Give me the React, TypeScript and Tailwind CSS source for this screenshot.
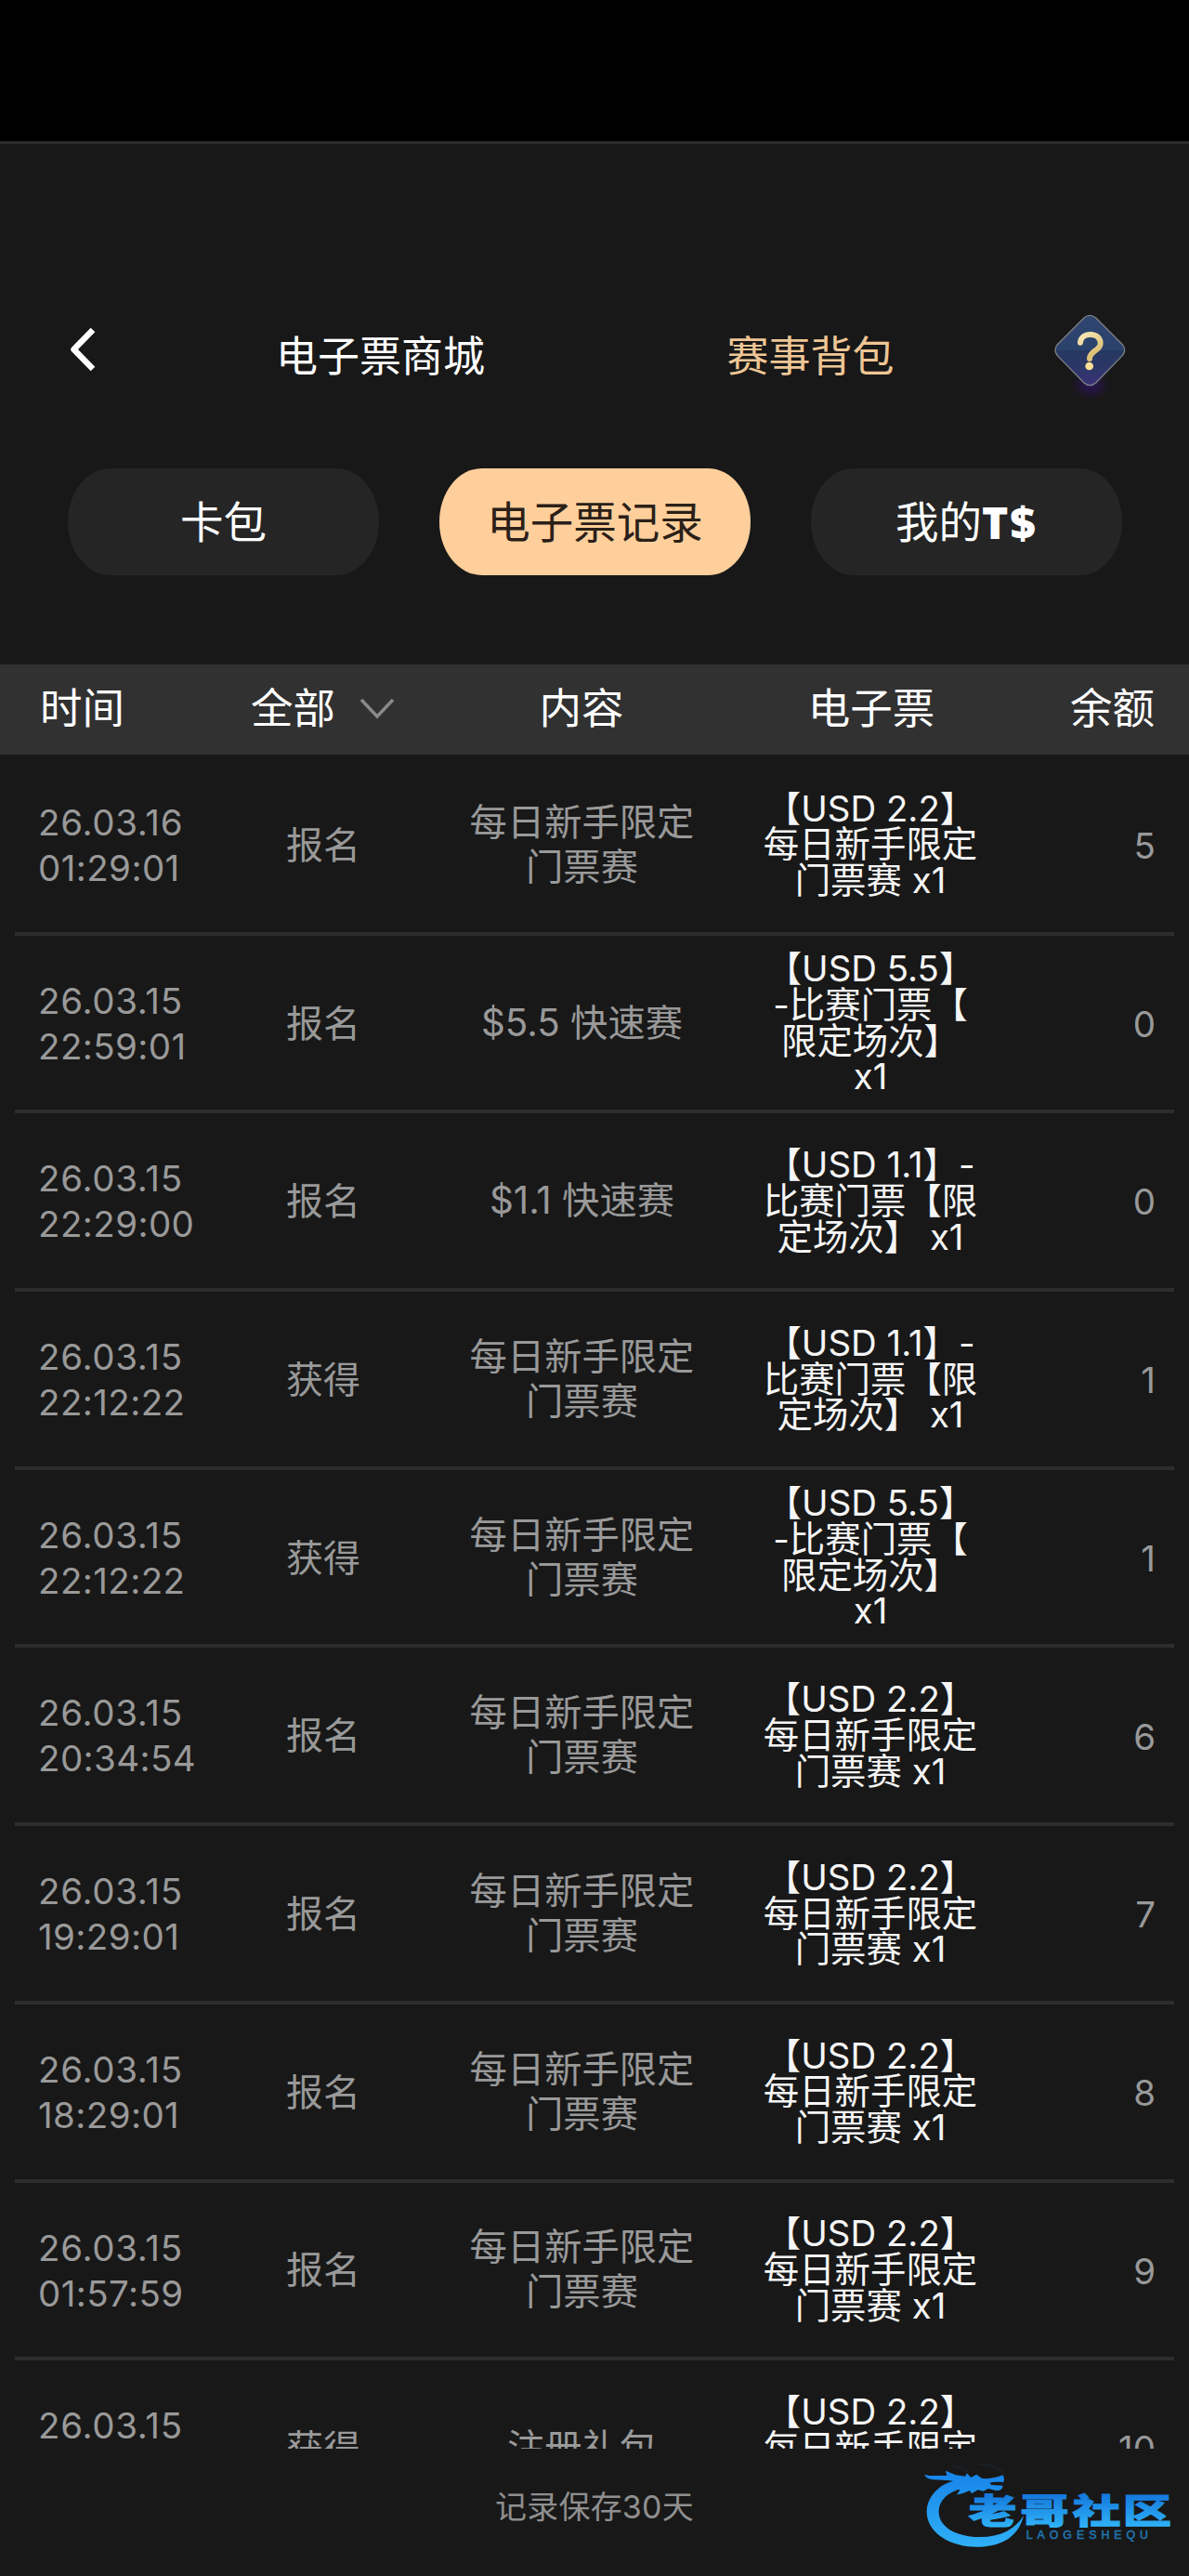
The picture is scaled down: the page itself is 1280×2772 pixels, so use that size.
import { ReactNode, useCallback, useState } from "react";
import clsx from "clsx";

interface TicketRecord {
  date: string;
  time: string;
  type: string;
  content: string[];
  ticket: string[];
  balance: number;
}

const DAILY = ["每日新手限定", "门票赛"];
const USD_2 = ["【USD 2.2】", "每日新手限定", "门票赛 x1"];
const USD_5 = ["【USD 5.5】", "-比赛门票【", "限定场次】", "x1"];
const USD_1 = ["【USD 1.1】-", "比赛门票【限", "定场次】 x1"];

const records: TicketRecord[] = [
  { date: "26.03.16", time: "01:29:01", type: "报名", content: DAILY, ticket: USD_2, balance: 5 },
  { date: "26.03.15", time: "22:59:01", type: "报名", content: ["$5.5 快速赛"], ticket: USD_5, balance: 0 },
  { date: "26.03.15", time: "22:29:00", type: "报名", content: ["$1.1 快速赛"], ticket: USD_1, balance: 0 },
  { date: "26.03.15", time: "22:12:22", type: "获得", content: DAILY, ticket: USD_1, balance: 1 },
  { date: "26.03.15", time: "22:12:22", type: "获得", content: DAILY, ticket: USD_5, balance: 1 },
  { date: "26.03.15", time: "20:34:54", type: "报名", content: DAILY, ticket: USD_2, balance: 6 },
  { date: "26.03.15", time: "19:29:01", type: "报名", content: DAILY, ticket: USD_2, balance: 7 },
  { date: "26.03.15", time: "18:29:01", type: "报名", content: DAILY, ticket: USD_2, balance: 8 },
  { date: "26.03.15", time: "01:57:59", type: "报名", content: DAILY, ticket: USD_2, balance: 9 },
  { date: "26.03.15", time: "", type: "获得", content: ["注册礼包"], ticket: USD_2.slice(0, 2), balance: 10 },
];

function Lines({ lines, className }: { lines: string[]; className: string }) {
  return (
    <div className={className}>
      {lines.map((line, i) => (
        <div key={i}>{line}</div>
      ))}
    </div>
  );
}

function HelpIcon() {
  return (
    <svg width="130" height="120" viewBox="0 0 390 360" fill="none">
      <defs>
        <linearGradient id="help-fill" x1="0" y1="56" x2="0" y2="286" gradientUnits="userSpaceOnUse">
          <stop offset="0" stopColor="#2f4670" />
          <stop offset="0.5" stopColor="#2a426c" />
          <stop offset="0.5" stopColor="#253860" />
          <stop offset="0.72" stopColor="#2b3766" />
          <stop offset="1" stopColor="#3a3078" />
        </linearGradient>
        <linearGradient id="help-mark" x1="155" y1="110" x2="235" y2="235" gradientUnits="userSpaceOnUse">
          <stop offset="0" stopColor="#fdf0c0" />
          <stop offset="0.6" stopColor="#dcc075" />
          <stop offset="1" stopColor="#fbe3a0" />
        </linearGradient>
        <radialGradient id="help-glow">
          <stop offset="0" stopColor="#2c1458" />
          <stop offset="1" stopColor="#2c1458" stopOpacity="0" />
        </radialGradient>
      </defs>
      <ellipse cx="195" cy="282" rx="62" ry="48" fill="url(#help-glow)" />
      <path
        d="M174 66Q193 50 212 66L298 152Q312 170 298 188L212 276Q193 292 174 276L88 188Q74 170 88 152Z"
        fill="url(#help-fill)"
        stroke="#7c8085"
        strokeWidth="4"
      />
      <path
        d="M162 146C163 130 176 120 195 120C215 120 227 132 227 149C227 172 192 172 192 198"
        stroke="url(#help-mark)"
        strokeWidth="18"
        strokeLinecap="round"
      />
      <circle cx="191" cy="222" r="13" fill="#fbe09a" />
    </svg>
  );
}

function Watermark() {
  return (
    <svg className="absolute bottom-0 right-0" width="300" height="132" viewBox="0 0 900 396" fill="none">
      <defs>
        <linearGradient id="ring" x1="0" y1="60" x2="0" y2="300" gradientUnits="userSpaceOnUse">
          <stop offset="0" stopColor="#1784ea" />
          <stop offset="1" stopColor="#2fb0f6" />
        </linearGradient>
        <linearGradient id="word" x1="0" y1="135" x2="0" y2="240" gradientUnits="userSpaceOnUse">
          <stop offset="0" stopColor="#1579dd" />
          <stop offset="1" stopColor="#2fb4f8" />
        </linearGradient>
      </defs>
      <path
        d="M150 86C92 98 52 142 53 190C54 252 120 303 222 302C304 299 352 262 366 200C338 246 290 270 226 270C148 270 92 238 92 188C92 150 122 126 170 112Z"
        fill="url(#ring)"
      />
      <path
        d="M45 68C60 74 88 72 118 72L114 56L146 70L178 74L182 64L196 78L214 68L230 80C250 84 276 80 298 70C304 78 304 88 300 94C286 92 270 92 256 95L262 102L298 104C300 114 290 122 276 120L252 114L236 122L218 118L198 130L192 120L172 128L150 134L160 118L140 112L146 92C120 84 100 88 68 84C56 82 48 76 45 68Z"
        fill="url(#ring)"
      />
      <path d="M220 36C260 34 296 48 302 68M140 42C160 44 180 54 190 64" stroke="#1b2a36" strokeWidth="3" />
      <g
        fill="url(#word)"
        stroke="url(#word)"
        strokeWidth="3"
        fontFamily="'Noto Sans CJK SC', sans-serif"
        fontWeight="900"
        fontSize="112"
      >
        <text x="188" y="229" textLength="155" lengthAdjust="spacingAndGlyphs">
          老
        </text>
        <text x="355" y="229" textLength="157" lengthAdjust="spacingAndGlyphs">
          哥
        </text>
        <text x="524" y="229" textLength="155" lengthAdjust="spacingAndGlyphs">
          社
        </text>
        <text x="686" y="229" textLength="157" lengthAdjust="spacingAndGlyphs">
          区
        </text>
      </g>
      <text
        x="374"
        y="277"
        fill="#2178b4"
        stroke="#2178b4"
        strokeWidth="1.500"
        fontFamily="'Liberation Sans', sans-serif"
        fontSize="37"
        textLength="394"
        lengthAdjust="spacing"
      >
        LAOGESHEQU
      </text>
    </svg>
  );
}

function Pill({ active, onClick, children }: { active: boolean; onClick: () => void; children: ReactNode }) {
  return (
    <button
      onClick={onClick}
      className={clsx(
        "flex h-[115px] w-[335px] items-center justify-center rounded-[46px/57px] pt-px text-[46.5px] leading-none",
        active ? "bg-[#ffcf9b] text-[#2b2018]" : "bg-[#252525] text-white"
      )}
    >
      {children}
    </button>
  );
}

function RecordRow({ record }: { record: TicketRecord }) {
  return (
    <div className="mx-4 h-[191.7px] shrink-0 border-b-4 border-[#2d2d2d] pl-[27px] pr-[20px]">
      <div className="grid h-full grid-cols-[205px_200px_357px_264px_175px] items-center text-[#999999]">
        <div className="-ml-[2px] self-start whitespace-nowrap pt-[46px] text-[38.5px] leading-[49px]">
          <div className="tracking-[0.7px]">{record.date}</div>
          <div className="tracking-[0.4px]">{record.time}</div>
        </div>
        <div className="pt-[2px] text-center text-[40px] leading-[48px]">{record.type}</div>
        <Lines
          lines={record.content}
          className="whitespace-nowrap text-center text-[40.3px] leading-[48px]"
        />
        <Lines
          lines={record.ticket}
          className={clsx(
            "whitespace-nowrap text-center text-[38.4px] leading-[38.7px] text-[#f5f5f5]",
            record.ticket.length < 3 && "pb-[38.7px]"
          )}
        />
        <div className="pt-[3px] text-right text-[38.5px] leading-none">{record.balance}</div>
      </div>
    </div>
  );
}

export default function App() {
  const [tab, setTab] = useState("records");

  const openCards = useCallback(() => setTab("cards"), []);
  const openRecords = useCallback(() => setTab("records"), []);
  const openBalance = useCallback(() => setTab("balance"), []);

  return (
    <div className="relative flex h-[2772px] w-[1280px] flex-col overflow-hidden bg-[#181818] font-['Inter','Noto_Sans_CJK_SC',sans-serif]">
      <div className="h-[155px] shrink-0 border-b-[3px] border-[#2d2d2d] bg-black" />

      <header className="mt-[165px] flex h-[120px] shrink-0 items-center text-[45px] leading-none">
        <button className="ml-[72px] flex w-[110px] pb-2">
          <svg width="34" height="50" viewBox="0 0 34 50" fill="none">
            <path d="M28 4L7.500 25L28 46" stroke="#ffffff" strokeWidth="6.500" strokeLinejoin="round" />
          </svg>
        </button>
        <button className="w-[455px] pt-1.5 text-white">电子票商城</button>
        <button className="w-[472px] pr-px pt-1.5 text-[#efc695]">赛事背包</button>
        <HelpIcon />
      </header>

      <nav className="mt-[64px] flex shrink-0 justify-between pl-[73px] pr-[72px]">
        <Pill active={tab === "cards"} onClick={openCards}>
          卡包
        </Pill>
        <Pill active={tab === "records"} onClick={openRecords}>
          电子票记录
        </Pill>
        <Pill active={tab === "balance"} onClick={openBalance}>
          我的
          <span className="font-['Open_Sans'] text-[48px] font-extrabold tracking-[2px]">T$</span>
        </Pill>
      </nav>

      <div className="mt-24 h-[97px] shrink-0 bg-[#313131] pl-[43px] pr-[37px]">
        <div className="flex h-full items-center pb-[2px] text-[45.5px] leading-none text-white">
          <div className="w-[227px]">时间</div>
          <button className="flex w-[250px] items-center gap-[26px]">
            全部
            <svg width="38" height="24" viewBox="0 0 38 24" fill="none">
              <path d="M2 2L19 20L36 2" stroke="#8a8a8a" strokeWidth="3.500" />
            </svg>
          </button>
          <div className="w-[212px] text-center">内容</div>
          <div className="w-[412px] text-center">电子票</div>
          <div className="flex-1 whitespace-nowrap text-right">余额</div>
        </div>
      </div>

      <main className="mt-[3px] flex h-[1820px] shrink-0 flex-col overflow-hidden">
        {records.map((record, i) => (
          <RecordRow key={i} record={record} />
        ))}
      </main>

      <footer className="flex flex-1 items-center justify-center pb-3 text-[34px] leading-none text-[#8f8f8f]">
        <span className="tracking-[0.2px]">记录保存30天</span>
      </footer>

      <Watermark />
    </div>
  );
}
